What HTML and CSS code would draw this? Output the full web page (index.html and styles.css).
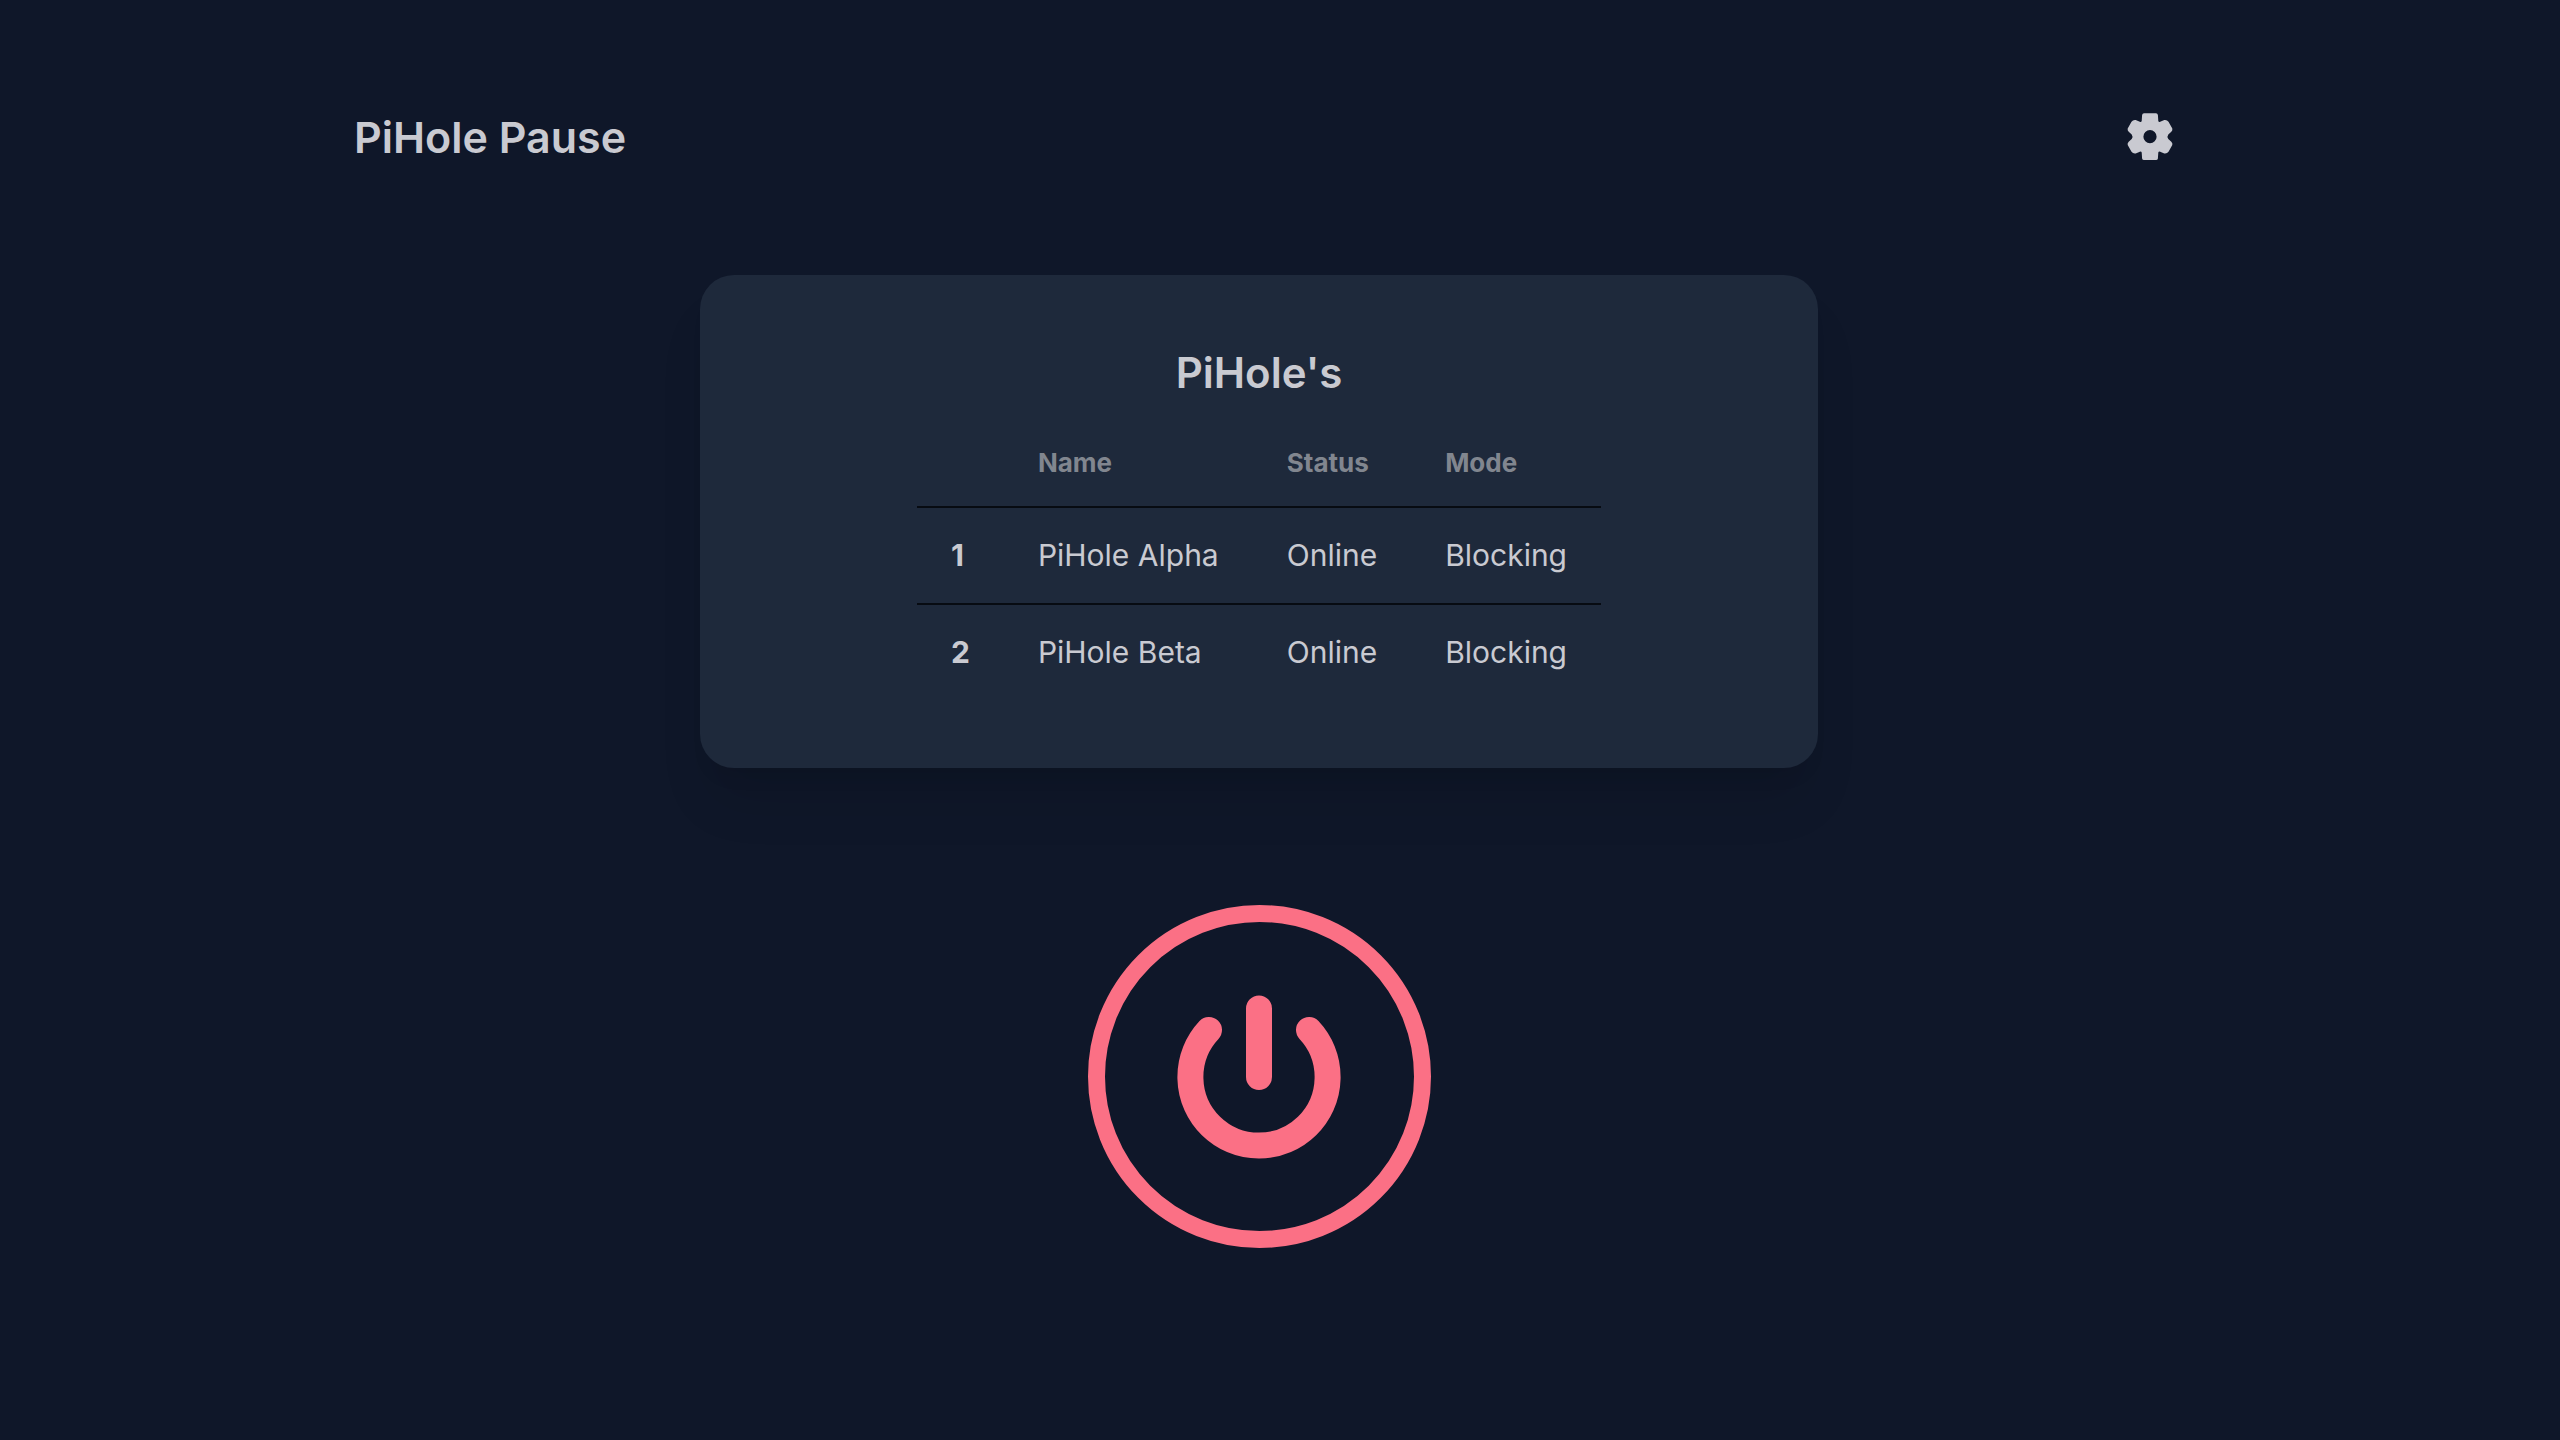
FILE: index.html
```html
<!DOCTYPE html>
<html lang="en">
<head>
<meta charset="utf-8">
<meta name="viewport" content="width=device-width, initial-scale=1">
<title>PiHole Pause</title>
<link rel="stylesheet" href="styles.css">
</head>
<body>
<div class="page">
  <header class="topbar">
    <h1 class="title">PiHole Pause</h1>
    <button class="settings" type="button" aria-label="Settings">
      <svg class="settings-icon" viewBox="-1 0 48 48" aria-hidden="true">
        <path fill-rule="evenodd" d="M17 .3H29Q30.600 .3 30.900 2L31.300 8Q31.800 9.300 33.200 8.700L37.300 7Q40 6.600 41.500 8.700L45.300 15.500Q45.800 17.200 44.300 18.700L41.300 21.500Q39.700 23.700 41.300 25.900L44.300 28.700Q45.800 30.200 45.300 31.900L41.500 38.700Q40 40.800 37.300 40.400L33.200 38.700Q31.800 38.100 31.300 39.400L30.900 45.400Q30.600 47.100 29 47.100H17Q15.400 47.100 15.100 45.400L14.700 39.400Q14.200 38.100 12.800 38.700L8.700 40.400Q6 40.800 4.500 38.700L.7 31.900Q.2 30.200 1.700 28.700L4.700 25.900Q6.300 23.700 4.700 21.500L1.700 18.700Q.2 17.200 .7 15.500L4.500 8.700Q6 6.600 8.700 7L12.800 8.700Q14.200 9.300 14.700 8L15.100 2Q15.400 .3 17 .3ZM23 17.100a6.600 6.600 0 1 0 0 13.200a6.600 6.600 0 0 0 0-13.200Z"/>
      </svg>
    </button>
  </header>
  <main class="content">
    <section class="card">
      <h2 class="title card-title">PiHole's</h2>
      <table class="table">
        <thead>
          <tr><th></th><th scope="col">Name</th><th scope="col">Status</th><th scope="col">Mode</th></tr>
        </thead>
        <tbody>
          <tr><th scope="row">1</th><td>PiHole Alpha</td><td>Online</td><td>Blocking</td></tr>
          <tr><th scope="row">2</th><td>PiHole Beta</td><td>Online</td><td>Blocking</td></tr>
        </tbody>
      </table>
    </section>
    <button class="power" type="button" aria-label="Pause blocking">
      <svg class="power-icon" viewBox="0 0 164 164" aria-hidden="true">
        <path d="M82 13.500V82M32 35A68.600 68.600 0 1 0 132 35"/>
      </svg>
    </button>
  </main>
</div>
</body>
</html>
```
FILE: styles.css
```css
* {
  box-sizing: border-box;
}

body {
  margin: 0;
  background: #0f1729;
  color: #c9cad1;
  font-family: Inter, "Liberation Sans", sans-serif;
  font-size: 30px;
  line-height: 45px;
}

.page {
  padding: 84px 42px 84px 0;
}

.topbar {
  display: flex;
  align-items: center;
  justify-content: space-between;
  width: 73%;
  min-height: 106px;
  margin: 0 auto;
  padding: 0 4px 0 14px;
}

.title {
  margin: 0;
  font-size: 43px;
  font-weight: 600;
  line-height: 60px;
}

.card-title {
  font-size: 42px;
}

.settings {
  display: flex;
  padding: 0;
  border: 0;
  background: none;
  color: inherit;
  cursor: pointer;
}

.settings-icon {
  width: 48px;
  height: 48px;
  fill: currentColor;
}

.content {
  display: flex;
  flex-direction: column;
  align-items: center;
  gap: 137px;
  padding-top: 85px;
}

.card {
  display: flex;
  flex-direction: column;
  align-items: center;
  gap: 16px;
  width: 1118px;
  max-width: 100%;
  padding: 68px;
  border-radius: 34px;
  background: #1e293b;
  box-shadow: 0 42px 52px -10px rgb(0 0 0 / 10%), 0 17px 21px -13px rgb(0 0 0 / 10%);
}

.table {
  border-collapse: collapse;
  text-align: left;
}

.table th,
.table td {
  padding: 25px 34px;
}

.table thead th {
  color: #81868f;
  font-size: 26px;
  font-weight: 700;
  line-height: 37px;
}

.table tbody tr {
  border-top: 2px solid #070b12;
}

.power {
  display: flex;
  align-items: center;
  justify-content: center;
  width: 343px;
  height: 343px;
  padding: 0;
  border: 17px solid #fb7085;
  border-radius: 50%;
  background: none;
  color: #fb7085;
  cursor: pointer;
}

.power-icon {
  width: 164px;
  height: 164px;
  fill: none;
  stroke: currentColor;
  stroke-width: 26;
  stroke-linecap: round;
}
```
